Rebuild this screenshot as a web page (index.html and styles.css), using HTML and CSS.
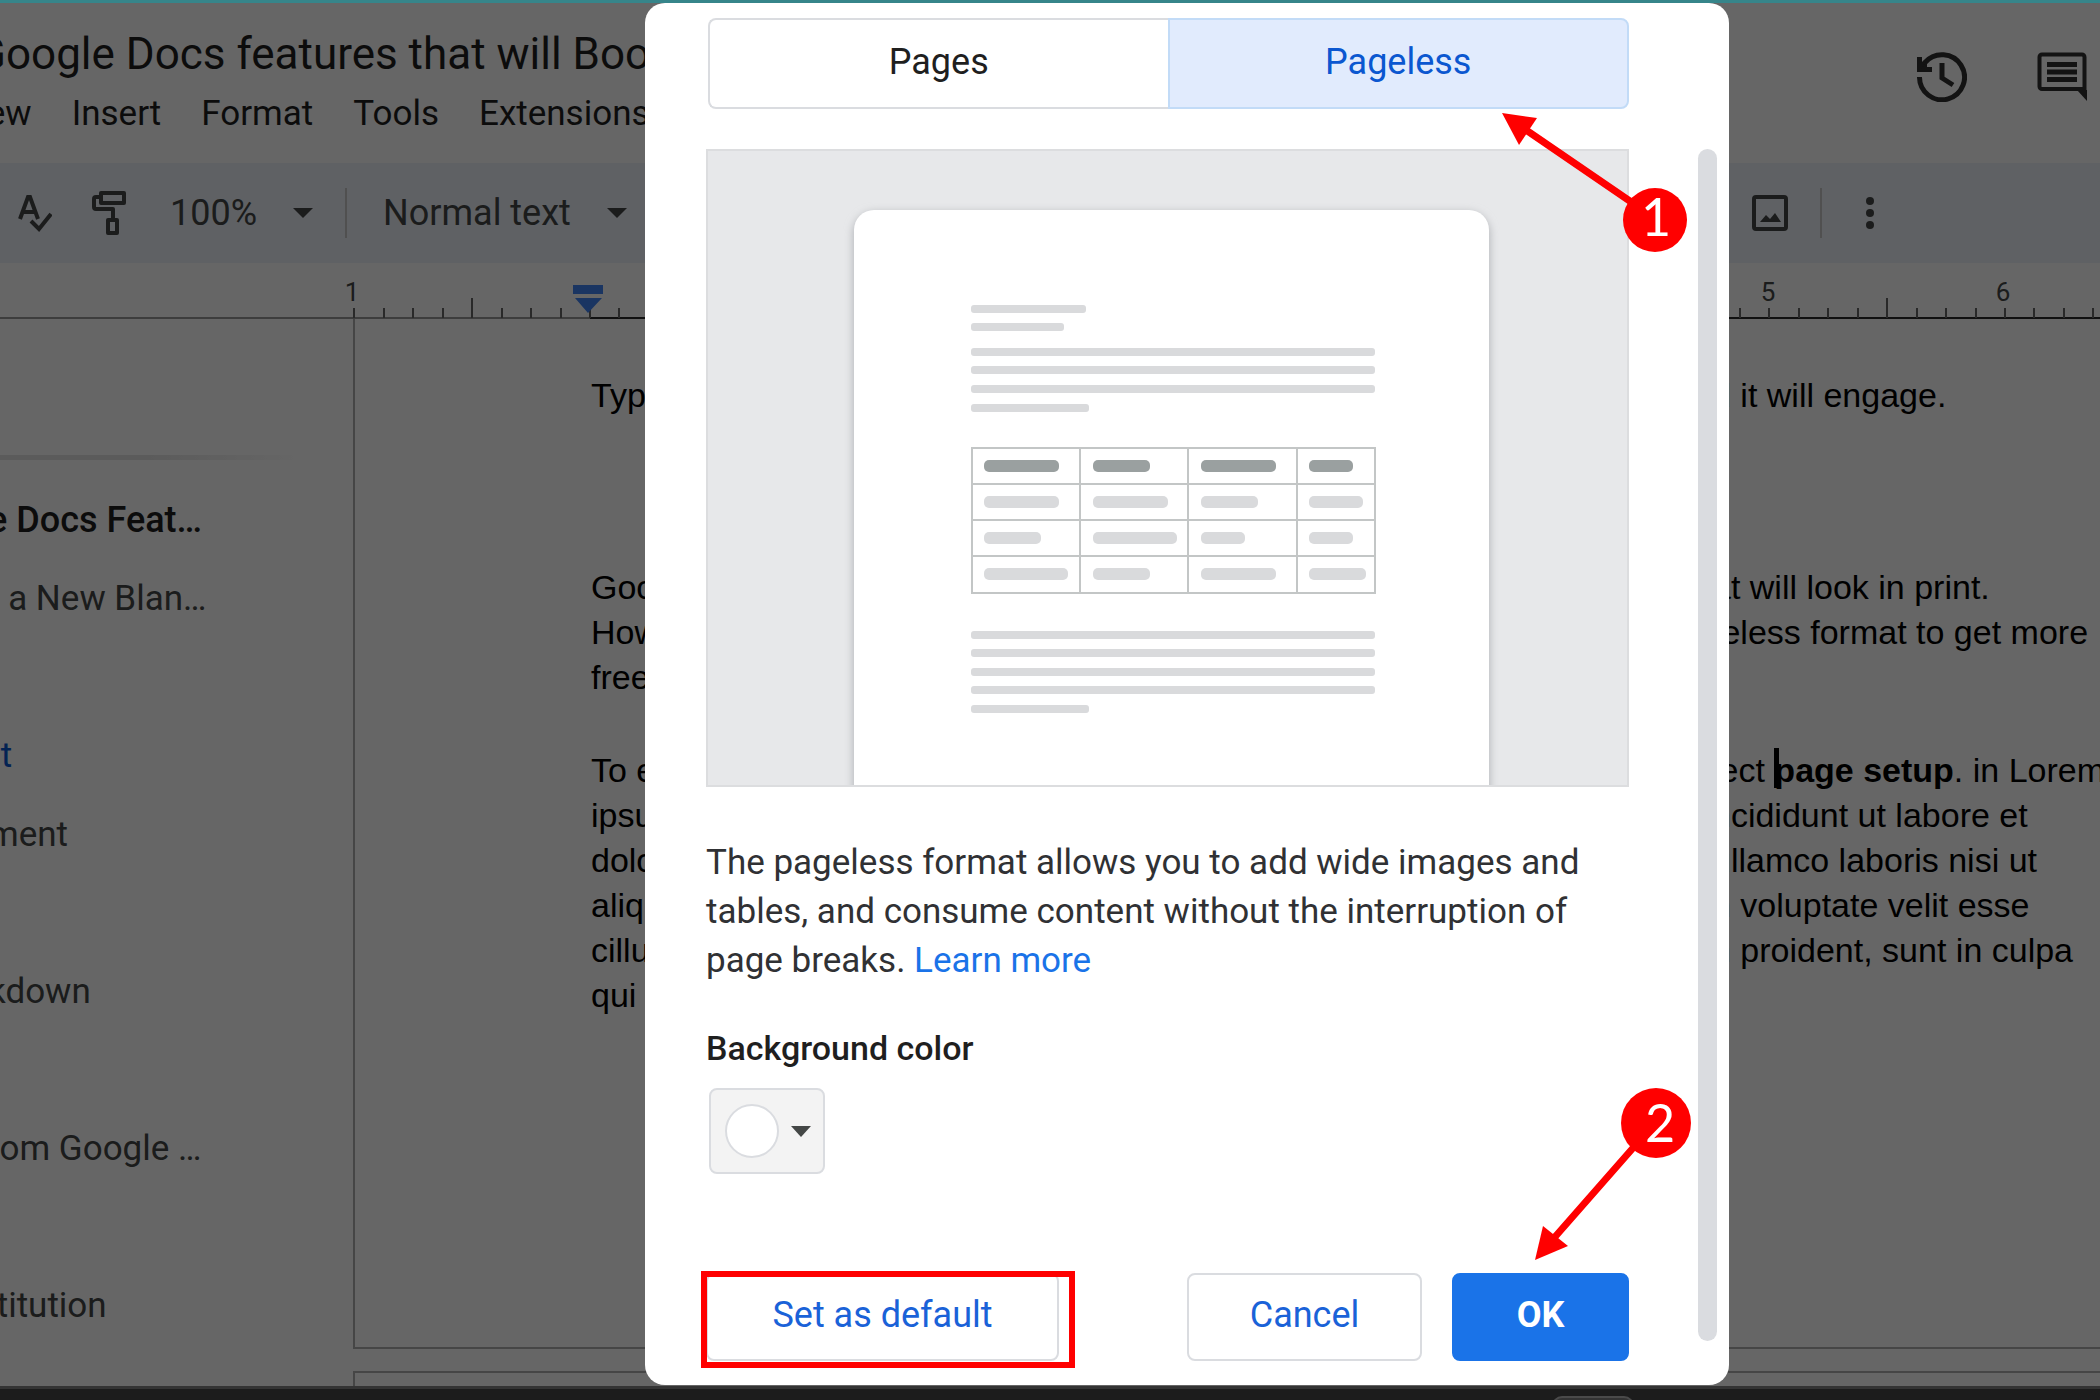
FILE: index.html
```html
<!DOCTYPE html>
<html lang="en">
<head>
<meta charset="utf-8">
<title>Google Docs - Page setup</title>
<link rel="stylesheet" href="styles.css">
</head>
<body>
<div class="strip"></div>
<div class="app">
  <header class="header">
    <div class="heading">
      <h1 class="title">Google Docs features that will Boo</h1>
      <nav class="menu">
        <a href="#">View</a><a href="#">Insert</a><a href="#">Format</a><a href="#">Tools</a><a href="#">Extensions</a>
      </nav>
    </div>
    <div class="header-actions">
      <button class="icon-button" aria-label="Version history">
        <svg width="50" height="50" viewBox="0 0 50 50" fill="none" stroke="currentColor" stroke-width="5">
          <path d="M2.500 25A22.500 22.500 0 1 0 8 10.500L4 15"/><path d="M2.500 5v12.500H15"/><path d="M3 18L10 9v9z" fill="currentColor" stroke="none"/><path d="M25 11v15l11 7"/>
        </svg>
      </button>
      <button class="icon-button" aria-label="Comments">
        <svg width="50" height="50" viewBox="0 0 50 50" fill="none" stroke="currentColor">
          <path d="M5 2.500h40a2.500 2.500 0 0 1 2.500 2.500v32H5A2.500 2.500 0 0 1 2.500 34.500V5A2.500 2.500 0 0 1 5 2.500z" stroke-width="4"/><path d="M40 38h10v11z" fill="currentColor" stroke="none"/><path d="M10 12.500h30M10 20h30M10 27.500h30" stroke-width="5"/>
        </svg>
      </button>
    </div>
  </header>

  <div class="toolbar">
    <div class="tools">
      <button class="icon-button" aria-label="Spelling and grammar check">
        <svg width="34" height="40" viewBox="0 0 34 40" fill="none" stroke="currentColor" stroke-width="4">
          <path d="M2 26L10 4h2l8 22M5 19h12"/><path d="M13 28l8 8 12-15"/>
        </svg>
      </button>
      <button class="icon-button" aria-label="Paint format">
        <svg width="34" height="44" viewBox="0 0 34 44" fill="none" stroke="currentColor" stroke-width="4" stroke-linejoin="round">
          <path d="M9 2h23v10H9zM9 6H4a2 2 0 0 0-2 2v8a2 2 0 0 0 2 2h17v11"/><path d="M16 29h9v13h-9z"/>
        </svg>
      </button>
      <button class="picker zoom">100%<svg class="caret" width="20" height="10" viewBox="0 0 20 10"><path d="M0 0h20L10 10z" fill="currentColor"/></svg></button>
      <span class="divider"></span>
      <button class="picker">Normal text<svg class="caret" width="20" height="10" viewBox="0 0 20 10"><path d="M0 0h20L10 10z" fill="currentColor"/></svg></button>
    </div>
    <div class="tools tools-end">
      <button class="icon-button" aria-label="Insert image">
        <svg width="36" height="36" viewBox="0 0 36 36" fill="none" stroke="currentColor" stroke-width="4">
          <rect x="2" y="2" width="32" height="32" rx="2"/><path d="M8 27l6-7 4 4 5-6 6 9z" fill="currentColor" stroke="none"/>
        </svg>
      </button>
      <span class="divider"></span>
      <button class="icon-button" aria-label="More">
        <svg width="8" height="32" viewBox="0 0 8 32" fill="currentColor"><circle cx="4" cy="4" r="4"/><circle cx="4" cy="16" r="4"/><circle cx="4" cy="28" r="4"/></svg>
      </button>
    </div>
  </div>

  <svg class="ruler" width="2100" height="56" viewBox="0 0 2100 56">
    <g fill="none" stroke-width="2">
      <path stroke="#9a9a9a" d="M0 55H590"/>
      <path stroke="#2c2c2c" d="M590 55H2100"/>
      <path stroke="#666" d="M354 45v10M384 45v10M413 45v10M443 45v10M472 35v20M502 45v10M531 45v10M561 45v10M590 45v10M619 45v10M1740 45v10M1769 45v10M1799 45v10M1828 45v10M1858 45v10M1887 35v20M1917 45v10M1946 45v10M1976 45v10M2005 45v10M2034 45v10M2064 45v10M2093 45v10"/>
    </g>
    <path fill="#4285f4" d="M573 22h30v9h-30zM575 35h27L588 50z"/>
    <g class="ruler-text" text-anchor="middle"><text x="352" y="38">1</text><text x="1768" y="38">5</text><text x="2003" y="38">6</text></g>
  </svg>

  <div class="workspace">
    <nav class="outline">
      <hr class="outline-rule">
      <ul class="outline-list">
        <li class="strong">e Docs Feat…</li>
        <li>t a New Blan…</li>
        <li></li>
        <li class="current">rt</li>
        <li>ment</li>
        <li></li>
        <li>kdown</li>
        <li></li>
        <li>rom Google …</li>
        <li></li>
        <li> titution</li>
      </ul>
    </nav>
    <main class="pages">
      <article class="page">
        <div class="para lead">
          <p class="line"><span>Type</span><span>d it will engage.</span></p>
        </div>
        <div class="para">
          <p class="line"><span>Goo</span><span>at will look in print.</span></p>
          <p class="line"><span>How</span><span> eless format to get more</span></p>
          <p class="line"><span>free</span></p>
        </div>
        <div class="para">
          <p class="line"><span>To e</span><span>lect <i class="cursor"></i><b>page setup</b>. in Lorem</span></p>
          <p class="line"><span>ipsu</span><span>ncididunt ut labore et</span></p>
          <p class="line"><span>dolo</span><span>ullamco laboris nisi ut</span></p>
          <p class="line"><span>aliq</span><span>n voluptate velit esse</span></p>
          <p class="line"><span>cillu</span><span>n proident, sunt in culpa</span></p>
          <p class="line"><span>qui</span></p>
        </div>
      </article>
      <article class="page page-next"></article>
    </main>
  </div>

  <div class="scrim">
    <section class="dialog" role="dialog" aria-label="Page setup">
      <div class="tabs" role="tablist">
        <button class="tab" role="tab">Pages</button>
        <button class="tab selected" role="tab" aria-selected="true">Pageless</button>
      </div>
      <div class="scroll-area">
        <div class="content">
          <svg class="preview" viewBox="0 0 923 638" role="img" aria-label="Pageless preview">
            <defs><filter id="soft" x="-5%" y="-5%" width="110%" height="110%"><feGaussianBlur stdDeviation="4"/></filter></defs>
            <rect width="923" height="638" fill="#e7e8ea"/>
            <rect x="147" y="63" width="637" height="620" rx="22" fill="#b4b6ba" filter="url(#soft)"/>
            <rect x="148" y="61" width="635" height="620" rx="20" fill="#fff"/>
            <g fill="#d9dadc">
              <rect x="265" y="156" width="115" height="8" rx="3"/><rect x="265" y="174" width="93" height="8" rx="3"/>
              <rect x="265" y="199" width="404" height="8" rx="3"/><rect x="265" y="217" width="404" height="8" rx="3"/><rect x="265" y="236" width="404" height="8" rx="3"/><rect x="265" y="255" width="118" height="8" rx="3"/>
              <rect x="265" y="482" width="404" height="8" rx="3"/><rect x="265" y="500" width="404" height="8" rx="3"/><rect x="265" y="519" width="404" height="8" rx="3"/><rect x="265" y="537" width="404" height="8" rx="3"/><rect x="265" y="556" width="118" height="8" rx="3"/>
              <rect x="278" y="347" width="75" height="12" rx="5"/><rect x="387" y="347" width="75" height="12" rx="5"/><rect x="495" y="347" width="57" height="12" rx="5"/><rect x="603" y="347" width="54" height="12" rx="5"/>
              <rect x="278" y="383" width="57" height="12" rx="5"/><rect x="387" y="383" width="84" height="12" rx="5"/><rect x="495" y="383" width="44" height="12" rx="5"/><rect x="603" y="383" width="44" height="12" rx="5"/>
              <rect x="278" y="419" width="84" height="12" rx="5"/><rect x="387" y="419" width="57" height="12" rx="5"/><rect x="495" y="419" width="75" height="12" rx="5"/><rect x="603" y="419" width="57" height="12" rx="5"/>
            </g>
            <g fill="#9aa0a0"><rect x="278" y="311" width="75" height="12" rx="5"/><rect x="387" y="311" width="57" height="12" rx="5"/><rect x="495" y="311" width="75" height="12" rx="5"/><rect x="603" y="311" width="44" height="12" rx="5"/></g>
            <path d="M266 299h403v145H266zM266 335h403M266 371h403M266 407h403M374 299v145M482 299v145M591 299v145" fill="none" stroke="#c3c6c6" stroke-width="2"/>
            <rect x="1" y="1" width="921" height="636" fill="none" stroke="#dcdddf" stroke-width="2"/>
          </svg>
          <p class="description">The pageless format allows you to add wide images and tables, and consume content without the interruption of page breaks. <a href="#">Learn more</a></p>
          <h2 class="label" id="bg-label">Background color</h2>
          <button class="swatch" aria-labelledby="bg-label"><span class="swatch-dot"></span><svg width="20" height="11" viewBox="0 0 20 11"><path d="M0 0h20L10 11z" fill="#444746"/></svg></button>
          <div class="actions">
            <button class="button default">Set as default</button>
            <button class="button cancel">Cancel</button>
            <button class="button primary">OK</button>
          </div>
        </div>
        <div class="scrollbar"></div>
      </div>
      <svg class="notes" width="1084" height="1383" viewBox="645 3 1084 1383">
        <g fill="#f00">
          <path d="M1502 113l35 5-18 27z"/><circle cx="1655" cy="220" r="32"/>
          <path d="M1535 1260l8-34 25 20z"/><circle cx="1656" cy="1123" r="35"/>
        </g>
        <g fill="none" stroke="#f00"><path stroke-width="7" d="M1526 130L1640 208M1554 1238L1640 1140"/><path stroke-width="6" d="M704 1274h368v91H704z"/></g>
        <g class="notes-text" text-anchor="middle"><text x="1656" y="236">1</text><text x="1660" y="1142">2</text></g>
      </svg>
    </section>
  </div>
</div>
<footer class="taskbar"><span class="taskbar-tab"></span></footer>
</body>
</html>
```
FILE: styles.css
```css
* { box-sizing: border-box; }

body {
  margin: 0;
  min-height: 100vh;
  display: flex;
  flex-direction: column;
  overflow: hidden;
  background: #fff;
  color: #1f1f1f;
  font-family: Roboto, "Liberation Sans", sans-serif;
  font-size: 36px;
}

button {
  font: inherit;
  color: inherit;
  border: 0;
  padding: 0;
  background: none;
}

a { text-decoration: none; color: inherit; }
h1, h2, p, ul { margin: 0; padding: 0; }
svg { display: block; flex: none; }

.strip { height: 3px; background: #36858a; }

.app {
  position: relative;
  flex: 1;
  display: flex;
  flex-direction: column;
  overflow: hidden;
}

/* Header */
.header {
  height: 160px;
  display: flex;
  justify-content: space-between;
}

.heading { margin-left: -24px; padding-top: 24px; }

.title {
  font-size: 44px;
  line-height: 54px;
  font-weight: 400;
  white-space: nowrap;
}

.menu {
  display: flex;
  gap: 40px;
  margin-left: -20px;
  padding-top: 10px;
  font-size: 35px;
  line-height: 46px;
}

.header-actions {
  display: flex;
  gap: 70px;
  align-items: flex-start;
  padding: 49px 13px 0 0;
}

.icon-button { display: flex; color: #444746; }
.header-actions .icon-button { color: #303030; }

/* Toolbar */
.toolbar {
  height: 100px;
  display: flex;
  justify-content: space-between;
  background: #edf2fa;
  color: #444746;
}

.tools { display: flex; align-items: center; gap: 40px; padding-left: 18px; }
.tools-end { padding: 0 226px 0 0; gap: 32px; }
.tools-end .icon-button:last-child { padding-left: 12px; }
.picker { display: flex; align-items: center; gap: 36px; }
.zoom { margin-left: 4px; }
.zoom + .divider { margin: 0 -4px 0 -8px; }
.divider { width: 2px; height: 50px; background: #c7c7c7; }

.ruler { overflow: hidden; }
.ruler-text { font-size: 26px; fill: #444746; }

/* Outline */
.workspace { flex: 1; display: flex; }

.outline { width: 353px; flex: none; overflow: hidden; padding-top: 136px; }

.outline-rule {
  width: 300px;
  height: 5px;
  margin: 0;
  border: 0;
  background: linear-gradient(90deg, #e4e4e4 50%, #fff);
}

.outline-list {
  display: grid;
  grid-auto-rows: 78px 79px;
  align-items: center;
  margin: 21px 0 0 -12px;
  list-style: none;
  white-space: pre;
  font-size: 35px;
  color: #444746;
}

.strong { font-size: 36px; font-weight: 500; color: #1f1f1f; }
.current { color: #0b57d0; }

/* Document */
.pages {
  flex: 1;
  display: flex;
  flex-direction: column;
  gap: 22px;
  overflow: hidden;
}

.page {
  height: 1030px;
  padding: 54px 0 0 236px;
  border: solid #b0b0b0;
  border-width: 0 0 2px 2px;
  color: #000;
}

.page-next { height: auto; flex: 1; padding: 0; border-width: 2px 0 0 2px; }

.para {
  margin-bottom: 48px;
  font: 34px/45px "Liberation Sans", Arial, sans-serif;
}

.lead { margin-bottom: 147px; }

.line {
  display: grid;
  grid-template-columns: 1121px 1fr;
  white-space: pre;
}

.cursor { position: absolute; width: 5px; height: 40px; background: #000; }

/* Dialog */
.scrim {
  position: absolute;
  inset: 0;
  padding-left: 645px;
  background: rgba(0, 0, 0, 0.6);
}

.dialog {
  position: relative;
  width: 1084px;
  padding: 15px 12px 24px 61px;
  border-radius: 20px;
  background: #fff;
}

.tabs { display: flex; margin: 0 88px 40px 2px; }

.tab {
  flex: 1;
  height: 91px;
  padding-bottom: 4px;
  border: 2px solid #dadce0;
  border-right: 0;
  border-radius: 8px 0 0 8px;
}

.selected {
  border: 2px solid #c2dbf7;
  border-radius: 0 8px 8px 0;
  background: #e1ebfd;
  color: #0b57d0;
}

.scroll-area { display: flex; justify-content: space-between; }
.content { width: 923px; }
.scrollbar { width: 19px; margin-bottom: 20px; border-radius: 10px; background: #dadce0; }
.preview { width: 100%; }

.description {
  margin-top: 51px;
  font-size: 35px;
  line-height: 49px;
  color: #303134;
}

.description a { color: #1a73e8; }

.label {
  margin-top: 38px;
  font-size: 34px;
  line-height: 50px;
  font-weight: 500;
}

.swatch {
  display: flex;
  align-items: center;
  gap: 12px;
  height: 86px;
  margin: 15px 0 0 3px;
  padding: 0 12px 0 14px;
  border: 2px solid #dadce0;
  border-radius: 8px;
  background: #f3f3f3;
}

.swatch-dot {
  width: 54px;
  height: 54px;
  border: 2px solid #dadce0;
  border-radius: 50%;
  background: #fff;
}

.actions { display: flex; gap: 30px; margin-top: 99px; }

.button {
  height: 88px;
  padding-bottom: 4px;
  border: 2px solid #dadce0;
  border-radius: 8px;
  color: #1a62d8;
}

.default { width: 353px; margin-right: auto; }
.cancel { width: 235px; }

.primary {
  width: 177px;
  border-color: #1a73e8;
  background: #1a73e8;
  color: #fff;
  font-weight: 700;
}

.notes { position: absolute; inset: 0; pointer-events: none; }
.notes-text { fill: #fff; font: 52px Lato, sans-serif; }

/* Bottom edge */
.taskbar {
  height: 14px;
  padding: 7px 0 0 1552px;
  border-top: 3px solid #343434;
  background: #1c1c1c;
  overflow: hidden;
}

.taskbar-tab {
  display: block;
  width: 82px;
  height: 20px;
  border: 2px solid #4a4a4a;
  border-radius: 12px;
  background: #333;
}
```
